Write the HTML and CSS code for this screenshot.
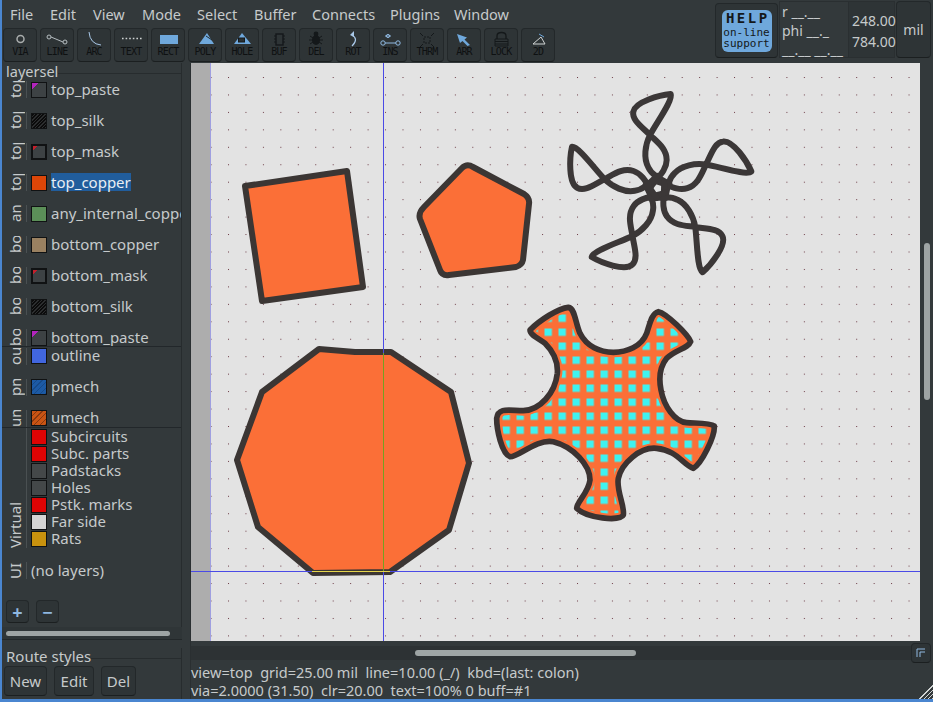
FILE: index.html
```html
<!doctype html>
<html lang="en">
<head>
  <meta charset="UTF-8">
  <title>pcb-rnd</title>
  <link rel="stylesheet" href="styles.css">
</head>
<body>
  <div class="window">
    <div class="topbar">
      <div class="topbar-left">
        <nav class="menubar">
          <span class="menu-file">File</span>
          <span class="menu-edit">Edit</span>
          <span class="menu-view">View</span>
          <span class="menu-mode">Mode</span>
          <span class="menu-select">Select</span>
          <span class="menu-buffer">Buffer</span>
          <span class="menu-connects">Connects</span>
          <span class="menu-plugins">Plugins</span>
          <span>Window</span>
        </nav>
        <div class="toolbar">
          <button class="tool"><svg viewBox="0 0 32 18"><circle cx="16.5" cy="10" r="3.5" fill="none" stroke="#a8acac" stroke-width="1.5"/></svg><span>VIA</span></button>
          <button class="tool"><svg viewBox="0 0 32 18"><path d="M10 8L22 13" stroke="#b5bcc0" fill="none"/><circle cx="8" cy="8" r="2" fill="#33393b" stroke="#b5bcc0"/><circle cx="24" cy="13" r="2" fill="#33393b" stroke="#b5bcc0"/></svg><span>LINE</span></button>
          <button class="tool"><svg viewBox="0 0 32 18"><path d="M11 3Q12 15 23 16" stroke="#a9c8e8" fill="none"/></svg><span>ARC</span></button>
          <button class="tool"><svg viewBox="0 0 32 18"><path d="M7 9.5H27" stroke="#d0d4d4" stroke-width="1.5" stroke-dasharray="1.6 2" fill="none"/></svg><span>TEXT</span></button>
          <button class="tool"><svg viewBox="0 0 32 18"><rect x="8" y="6" width="18" height="9" fill="#6fa8dc"/></svg><span>RECT</span></button>
          <button class="tool"><svg viewBox="0 0 32 18"><path d="M10 15L18 4L25 15Z" fill="#6fa8dc"/><path d="M17 7L23 11" stroke="#22282a" fill="none"/></svg><span>POLY</span></button>
          <button class="tool"><svg viewBox="0 0 32 18"><path d="M8 15L16 4L25 15Z" fill="#6fa8dc"/><rect x="12.5" y="9" width="6" height="4" fill="#2a3032" stroke="#14181a"/></svg><span>HOLE</span></button>
          <button class="tool"><svg viewBox="0 0 32 18"><rect x="13" y="5" width="7" height="11" fill="none" stroke="#14181a" stroke-width="1.4"/><path d="M11 7H22M11 10H22M11 13H22" stroke="#14181a" stroke-dasharray="2 7" fill="none"/></svg><span>BUF</span></button>
          <button class="tool"><svg viewBox="0 0 32 18"><ellipse cx="16" cy="11" rx="4" ry="5" fill="#14181a"/><circle cx="16" cy="5" r="2.4" fill="#14181a"/><path d="M10 7L22 15M22 7L10 15M9 11H23" stroke="#14181a" fill="none"/></svg><span>DEL</span></button>
          <button class="tool"><svg viewBox="0 0 32 18"><path d="M15 6Q22 10 15 17" stroke="#a9c8e8" stroke-width="1.2" fill="none"/><path d="M17 2L13 6L17 8Z" fill="#a9c8e8"/></svg><span>ROT</span></button>
          <button class="tool"><svg viewBox="0 0 32 18"><path d="M11 14H22M11 7H17" stroke="#8fb8e0" fill="none"/><circle cx="9" cy="14" r="2.2" fill="none" stroke="#8fb8e0"/><circle cx="24" cy="14" r="2.2" fill="none" stroke="#8fb8e0"/><circle cx="14" cy="7" r="1.6" fill="none" stroke="#8fb8e0"/></svg><span>INS</span></button>
          <button class="tool"><svg viewBox="0 0 32 18"><rect x="13" y="8" width="6" height="6" fill="none" stroke="#14181a" stroke-dasharray="2 1"/><path d="M9 4L12 7M23 4L20 7M9 18L12 15M23 18L20 15" stroke="#14181a" fill="none"/></svg><span>THRM</span></button>
          <button class="tool"><svg viewBox="0 0 32 18"><path d="M9 5L19 8.5L16.5 10.5L22 16L19.5 17L14.5 12L12 14Z" fill="#6fa8dc"/></svg><span>ARR</span></button>
          <button class="tool"><svg viewBox="0 0 32 18"><path d="M12 10V7Q12 3.5 16.5 3.5T21 7V10" fill="none" stroke="#14181a" stroke-width="1.3"/><path d="M10 10H23V17H10ZM10 12.5H23M10 15H23" fill="none" stroke="#14181a"/></svg><span>LOCK</span></button>
          <button class="tool"><svg viewBox="0 0 32 18"><path d="M11 15L19 8L23 15Z" fill="none" stroke="#d0d4d4"/><path d="M17 5L22 8" stroke="#6fa8dc" fill="none"/></svg><span>2D</span></button>
        </div>
      </div>
      <div class="readout">
        <button class="help-btn">
          <span class="help-badge">
            <span class="help-title">HELP</span>
            <span>on-line</span>
            <span>support</span>
          </span>
        </button>
        <div class="coords-box">
          <span>r __.__</span>
          <span>phi __._</span>
          <span>__.__ __.__</span>
        </div>
        <div class="pos-box">
          <span>248.00</span>
          <span>784.00</span>
        </div>
        <button class="unit-btn">mil</button>
      </div>
    </div>

    <div class="main">
      <aside class="sidebar">
        <section class="frame layers-frame">
          <div class="frame-head"><span>layersel</span></div>

          <div class="layer-group group-first">
            <div class="layer-row"><span class="group-tab"><span>top</span></span><span class="swatch swatch-paste"></span><span class="layer-name">top_paste</span></div>
            <div class="layer-row"><span class="group-tab"><span>top</span></span><span class="swatch swatch-silk"></span><span class="layer-name">top_silk</span></div>
            <div class="layer-row"><span class="group-tab"><span>top</span></span><span class="swatch swatch-mask"></span><span class="layer-name">top_mask</span></div>
            <div class="layer-row"><span class="group-tab"><span>top</span></span><span class="swatch swatch-top-copper"></span><span class="layer-name is-selected">top_copper</span></div>
            <div class="layer-row"><span class="group-tab"><span>any_internal</span></span><span class="swatch swatch-internal"></span><span class="layer-name">any_internal_copper</span></div>
            <div class="layer-row"><span class="group-tab"><span>bottom</span></span><span class="swatch swatch-bottom-copper"></span><span class="layer-name">bottom_copper</span></div>
            <div class="layer-row"><span class="group-tab"><span>bottom</span></span><span class="swatch swatch-mask"></span><span class="layer-name">bottom_mask</span></div>
            <div class="layer-row"><span class="group-tab"><span>bottom</span></span><span class="swatch swatch-silk"></span><span class="layer-name">bottom_silk</span></div>
            <div class="layer-row"><span class="group-tab"><span>bottom</span></span><span class="swatch swatch-paste"></span><span class="layer-name">bottom_paste</span></div>
          </div>

          <div class="layer-group group-mech">
            <div class="layer-row"><span class="group-tab"><span>outline</span></span><span class="swatch swatch-outline"></span><span class="layer-name">outline</span></div>
            <div class="layer-row"><span class="group-tab"><span>pmech</span></span><span class="swatch swatch-pmech"></span><span class="layer-name">pmech</span></div>
            <div class="layer-row"><span class="group-tab"><span>umech</span></span><span class="swatch swatch-umech"></span><span class="layer-name">umech</span></div>
          </div>

          <div class="virtual-group">
            <span class="group-tab virtual-tab"><span>Virtual</span></span>
            <div class="virtual-list">
              <div class="virtual-row"><span class="swatch swatch-red"></span><span class="layer-name">Subcircuits</span></div>
              <div class="virtual-row"><span class="swatch swatch-red"></span><span class="layer-name">Subc. parts</span></div>
              <div class="virtual-row"><span class="swatch swatch-grey"></span><span class="layer-name">Padstacks</span></div>
              <div class="virtual-row"><span class="swatch swatch-grey"></span><span class="layer-name">Holes</span></div>
              <div class="virtual-row"><span class="swatch swatch-red"></span><span class="layer-name">Pstk. marks</span></div>
              <div class="virtual-row"><span class="swatch swatch-far"></span><span class="layer-name">Far side</span></div>
              <div class="virtual-row"><span class="swatch swatch-rats"></span><span class="layer-name">Rats</span></div>
            </div>
          </div>

          <div class="ui-group">
            <span class="group-tab"><span>UI</span></span>
            <span class="no-layers">(no layers)</span>
          </div>

          <div class="layer-actions">
            <button class="small-btn">+</button>
            <button class="small-btn">&minus;</button>
          </div>
        </section>

        <div class="side-scroll"><span></span></div>

        <section class="frame route-frame">
          <div class="frame-head"><span>Route styles</span></div>
          <div class="route-buttons">
            <button class="route-btn">New</button>
            <button class="route-btn">Edit</button>
            <button class="route-btn">Del</button>
          </div>
        </section>
      </aside>

      <div class="work">
        <div class="canvas-row">
          <svg class="canvas" viewBox="191 63 729 578" width="729" height="578">
            <defs>
              <pattern id="grid" x="228" y="77" width="17.45" height="17.45" patternUnits="userSpaceOnUse">
                <rect width="1" height="1" fill="#6b3a44"/>
              </pattern>
              <pattern id="cells" x="544.5" y="328.5" width="14" height="14" patternUnits="userSpaceOnUse">
                <rect width="14" height="14" fill="#fb6f37"/>
                <rect width="7.4" height="7.4" fill="#3ff2f0"/>
              </pattern>
              <path id="blade" d="M296 330C315 298 350 275 350 240C350 205 320 185 300 165C275 140 245 120 250 95C255 65 330 45 362 42C370 60 318 130 300 165C285 195 280 235 295 262C305 285 332 298 358 312"/>
              <path id="gear" d="M150 120C180 90 235 55 265 52C285 55 285 95 300 130C320 170 360 187 400 187C440 187 485 170 500 130C510 100 515 70 535 65C560 70 625 135 632 155C625 175 585 180 560 205C540 230 535 260 543 300C552 350 585 395 620 398C650 400 690 398 703 408C705 440 665 520 640 535C610 525 590 480 530 475C480 470 425 520 415 565C408 600 435 650 430 675C420 695 320 685 290 655C290 635 325 610 330 570C330 525 280 470 220 455C170 445 110 505 90 500C65 490 50 420 50 385C55 350 90 362 130 362C180 360 225 310 232 250C235 210 215 180 195 160C175 145 150 135 150 120Z"/>
              <clipPath id="gear-clip"><use href="#gear"/></clipPath>
            </defs>

            <rect x="191" y="63" width="729" height="578" fill="#e3e3e3"/>
            <rect x="191" y="63" width="19" height="578" fill="#adadad"/>
            <rect x="210" y="63" width="710" height="578" fill="url(#grid)"/>
            <rect x="210" y="63" width="1" height="578" fill="#9f9fe0"/>

            <g class="shape">
              <path d="M245 186L347 171L363 287L262 301Z"/>
              <path d="M424 207L462 168Q467 163 473 167L524 194Q530 198 529 204L523 260Q522 265 516 267L449 275Q442 276 440 270L420 219Q418 213 424 207Z"/>
              <path d="M319 349L355 352L391 352L451 392L469 463L449 530L390 572L313 573L258 527L237 460L262 392Z"/>
            </g>

            <g class="outline-only" transform="translate(550 80) scale(.33333)">
              <use href="#blade"/>
              <use href="#blade" transform="rotate(72 323 325)"/>
              <use href="#blade" transform="rotate(144 323 325)"/>
              <use href="#blade" transform="rotate(216 323 325)"/>
              <use href="#blade" transform="rotate(288 323 325)"/>
            </g>

            <g transform="translate(480 290) scale(.33333)">
              <g clip-path="url(#gear-clip)">
                <g transform="scale(3) translate(-480 -290)">
                  <rect x="480" y="290" width="250" height="240" fill="url(#cells)"/>
                </g>
                <use href="#gear" fill="none" stroke="#fb6f37" stroke-width="30"/>
              </g>
              <use href="#gear" fill="none" stroke="#3b3332" stroke-width="17" stroke-linejoin="round"/>
            </g>

            <rect x="383" y="63" width="1" height="578" fill="#4a4ae6"/>
            <rect x="191" y="571" width="729" height="1" fill="#4a4ae6"/>
            <rect x="383" y="353" width="1" height="218" fill="#76a020"/>
            <rect x="312" y="571" width="78" height="1" fill="#e8d84a"/>
          </svg>
          <div class="v-scroll"><span></span></div>
        </div>

        <div class="h-scroll-row">
          <div class="h-scroll"><span></span></div>
          <button class="corner-btn"><svg viewBox="0 0 10 10" width="10" height="10"><path d="M9 1H1V9M9 4H4V9" fill="none" stroke="#8fb8e0"/></svg></button>
        </div>

        <div class="statusbar">
          <div class="status-line">view=top  grid=25.00 mil  line=10.00 (_/)  kbd=(last: colon)</div>
          <div class="status-line">via=2.0000 (31.50)  clr=20.00  text=100% 0 buff=#1</div>
          <span class="grip"></span>
        </div>
      </div>
    </div>
  </div>
</body>
</html>
```

FILE: styles.css
```css
* {
  box-sizing: border-box;
}
html, body {
  margin: 0;
  height: 100%;
  overflow: hidden;
}
body {
  font-family: 'Noto Sans', sans-serif;
  font-size: 14px;
  color: #c6cacb;
  background: #33393b;
}
button {
  font: inherit;
  color: inherit;
  padding: 0;
  background: #2e3436;
  border: 1px solid #23282a;
  border-bottom-color: #1b1f20;
  border-radius: 4px;
}
.window {
  width: 933px;
  height: 702px;
  display: flex;
  flex-direction: column;
  border-left: 2px solid #4a86d0;
  border-bottom: 3px solid #4a86d0;
}

/* top bar */
.topbar {
  height: 63px;
  display: flex;
  justify-content: space-between;
  flex: none;
}
.menubar {
  height: 27px;
  display: flex;
  align-items: center;
  padding-left: 8px;
  font-size: 14.5px;
  white-space: nowrap;
}
.menu-file { width: 40px; }
.menu-edit { width: 43px; }
.menu-view { width: 49px; }
.menu-mode { width: 55px; }
.menu-select { width: 57px; }
.menu-buffer { width: 58px; }
.menu-connects { width: 78px; }
.menu-plugins { width: 64px; }

.toolbar {
  display: flex;
  gap: 3px;
  padding: 1px 0 0 1px;
}
.tool {
  width: 34px;
  height: 34px;
  display: flex;
  flex-direction: column;
  align-items: center;
  overflow: hidden;
  font-family: 'DejaVu Sans Mono', monospace;
  font-size: 10px;
  letter-spacing: -0.8px;
  line-height: 10px;
  color: #0e1112;
}
.tool svg {
  width: 32px;
  height: 18px;
  flex: none;
}

.readout {
  display: flex;
  padding: 1px 2px 5px 0;
}
.help-btn {
  width: 63px;
  margin: 2px 1px 0 0;
  display: flex;
  align-items: center;
  justify-content: center;
}
.help-badge {
  width: 50px;
  height: 42px;
  background: #6fa8dc;
  border-radius: 6px;
  display: flex;
  flex-direction: column;
  align-items: center;
  font-family: 'DejaVu Sans Mono', monospace;
  font-size: 11px;
  line-height: 11px;
  color: #14181a;
}
.help-title {
  font-size: 14px;
  font-weight: bold;
  letter-spacing: 2.5px;
  margin: 1px -2.5px 2px 0;
  line-height: 14px;
}
.coords-box {
  width: 70px;
  padding: 0 0 0 2px;
  border: 1px solid #2a2f31;
  display: flex;
  flex-direction: column;
  line-height: 19px;
  white-space: nowrap;
}
.pos-box {
  width: 46px;
  padding: 9px 0 0 3px;
  border: 1px solid #2a2f31;
  border-left: 0;
  background: #2e3436;
  display: flex;
  flex-direction: column;
  gap: 2px;
  line-height: 19px;
}
.unit-btn {
  width: 35px;
  margin-left: 1px;
}

/* left column */
.main {
  flex: 1;
  display: flex;
  min-height: 0;
}
.sidebar {
  width: 189px;
  flex: none;
  display: flex;
  flex-direction: column;
  border-right: 1px solid #2a2f31;
}
.frame {
  width: 180px;
  border-right: 1px solid #272c2e;
  font-size: 15px;
}
.frame-head {
  height: 11px;
  display: flex;
  align-items: flex-start;
  padding-left: 4px;
  line-height: 16px;
  font-size: 14.5px;
}
.frame-head::after {
  content: "";
  flex: 1;
  height: 1px;
  margin-top: 10px;
  background: #272c2e;
}
.route-frame .frame-head {
  font-size: 15px;
}
.layers-frame {
  height: 564px;
  display: flex;
  flex-direction: column;
}
.layer-group {
  flex: none;
  overflow: hidden;
  border-bottom: 1px solid #22272a;
  display: flex;
  flex-direction: column;
}
.group-first {
  height: 273px;
}
.group-mech {
  height: 81px;
  justify-content: center;
}
.layer-row {
  flex: none;
  height: 31px;
  display: flex;
  align-items: center;
  overflow: hidden;
}
.group-tab {
  flex: none;
  width: 25px;
  height: 17px;
  padding-left: 5px;
  border-right: 1px solid #4a5052;
  overflow: hidden;
  margin-right: 4px;
}
.group-tab span {
  display: block;
  height: 100%;
  width: 16px;
  writing-mode: vertical-rl;
  transform: rotate(180deg);
  white-space: nowrap;
  line-height: 16px;
}
.swatch {
  flex: none;
  width: 16px;
  height: 16px;
  border: 1px solid #101213;
  margin-right: 4px;
}
.swatch-paste { background: linear-gradient(135deg, #b224bd 22%, #3d4244 22%); }
.swatch-silk { background: repeating-linear-gradient(135deg, #0b0b0b 0 1.5px, #2c2e2f 1.5px 2.5px); }
.swatch-mask {
  border-width: 2px;
  background: linear-gradient(135deg, #c4202c 20%, #3d4244 20%);
}
.swatch-top-copper { background: #dc4608; }
.swatch-internal { background: #5b8f58; }
.swatch-bottom-copper { background: #9a8161; }
.swatch-outline { background: #4166df; }
.swatch-pmech { background: repeating-linear-gradient(135deg, #1c5aa5 0 3px, #174a88 3px 4px); }
.swatch-umech { background: repeating-linear-gradient(135deg, #c95414 0 3px, #87380f 3px 4px); }
.swatch-red { background: #de0404; }
.swatch-grey { background: #444849; }
.swatch-far { background: #d4d4d4; }
.swatch-rats { background: #c8920e; }
.layer-name {
  white-space: nowrap;
  line-height: 18px;
  margin-top: -2px;
}
.is-selected {
  background: #215d9c;
  color: #e8eef4;
}
.virtual-group {
  display: flex;
  height: 120px;
  flex: none;
}
.virtual-tab {
  height: 120px;
}
.virtual-list {
  display: flex;
  flex-direction: column;
}
.virtual-row {
  display: flex;
  align-items: center;
  height: 17px;
}
.virtual-row .layer-name {
  line-height: 17px;
  margin-top: 0;
}
.ui-group {
  display: flex;
  align-items: center;
  margin-top: 14px;
}
.no-layers {
  line-height: 17px;
}
.layer-actions {
  margin-top: auto;
  padding: 0 0 4px 4px;
  display: flex;
  gap: 7px;
}
.small-btn {
  width: 23px;
  height: 23px;
  color: #8fb8e0;
  font-size: 18px;
  font-weight: bold;
  line-height: 18px;
}
.side-scroll {
  height: 13px;
  width: 180px;
  flex: none;
  padding: 4px 0 0 4px;
  background: #2f3537;
  border-bottom: 1px solid #23282a;
}
.side-scroll span {
  display: block;
  width: 164px;
  height: 5px;
  border-radius: 3px;
  background: #9ea4a4;
}
.route-frame {
  margin-top: 8px;
  flex: 1;
  min-height: 0;
}
.route-buttons {
  display: flex;
  gap: 7px;
  padding: 7px 0 0 2px;
}
.route-btn {
  height: 30px;
  width: 43px;
}
.route-btn + .route-btn {
  width: 40px;
}
.route-btn:last-child {
  width: 35px;
}

/* canvas */
.work {
  flex: 1;
  display: flex;
  flex-direction: column;
  min-width: 0;
}
.canvas-row {
  display: flex;
  height: 578px;
  flex: none;
}
.canvas {
  display: block;
  flex: none;
}
.shape path {
  fill: #fb6f37;
  stroke: #3b3634;
  stroke-width: 6;
  stroke-linejoin: round;
}
.outline-only use {
  fill: none;
  stroke: #3b3737;
  stroke-width: 18;
  stroke-linecap: round;
  stroke-linejoin: round;
}
.v-scroll {
  flex: 1;
  padding: 180px 0 0 4px;
}
.v-scroll span {
  display: block;
  width: 6px;
  height: 157px;
  border-radius: 3px;
  background: #9ea4a4;
}
.h-scroll-row {
  height: 22px;
  flex: none;
  display: flex;
  padding-right: 2px;
}
.h-scroll {
  flex: 1;
  height: 14px;
  margin-top: 5px;
  padding: 4px 0 0 224px;
  background: #2d3234;
}
.h-scroll span {
  display: block;
  width: 221px;
  height: 6px;
  border-radius: 3px;
  background: #9ea4a4;
}
.corner-btn {
  width: 20px;
  height: 20px;
  margin-top: 2px;
  display: flex;
  align-items: center;
  justify-content: center;
}
.statusbar {
  flex: none;
  height: 36px;
  position: relative;
  line-height: 18px;
  font-size: 14.5px;
}
.status-line {
  white-space: pre;
}
.grip {
  position: absolute;
  right: 0;
  bottom: 0;
  width: 17px;
  height: 17px;
  background: repeating-linear-gradient(135deg, transparent 0 2px, #d0d4d4 2px 3px);
  clip-path: polygon(100% 0, 100% 100%, 0 100%);
}
```
